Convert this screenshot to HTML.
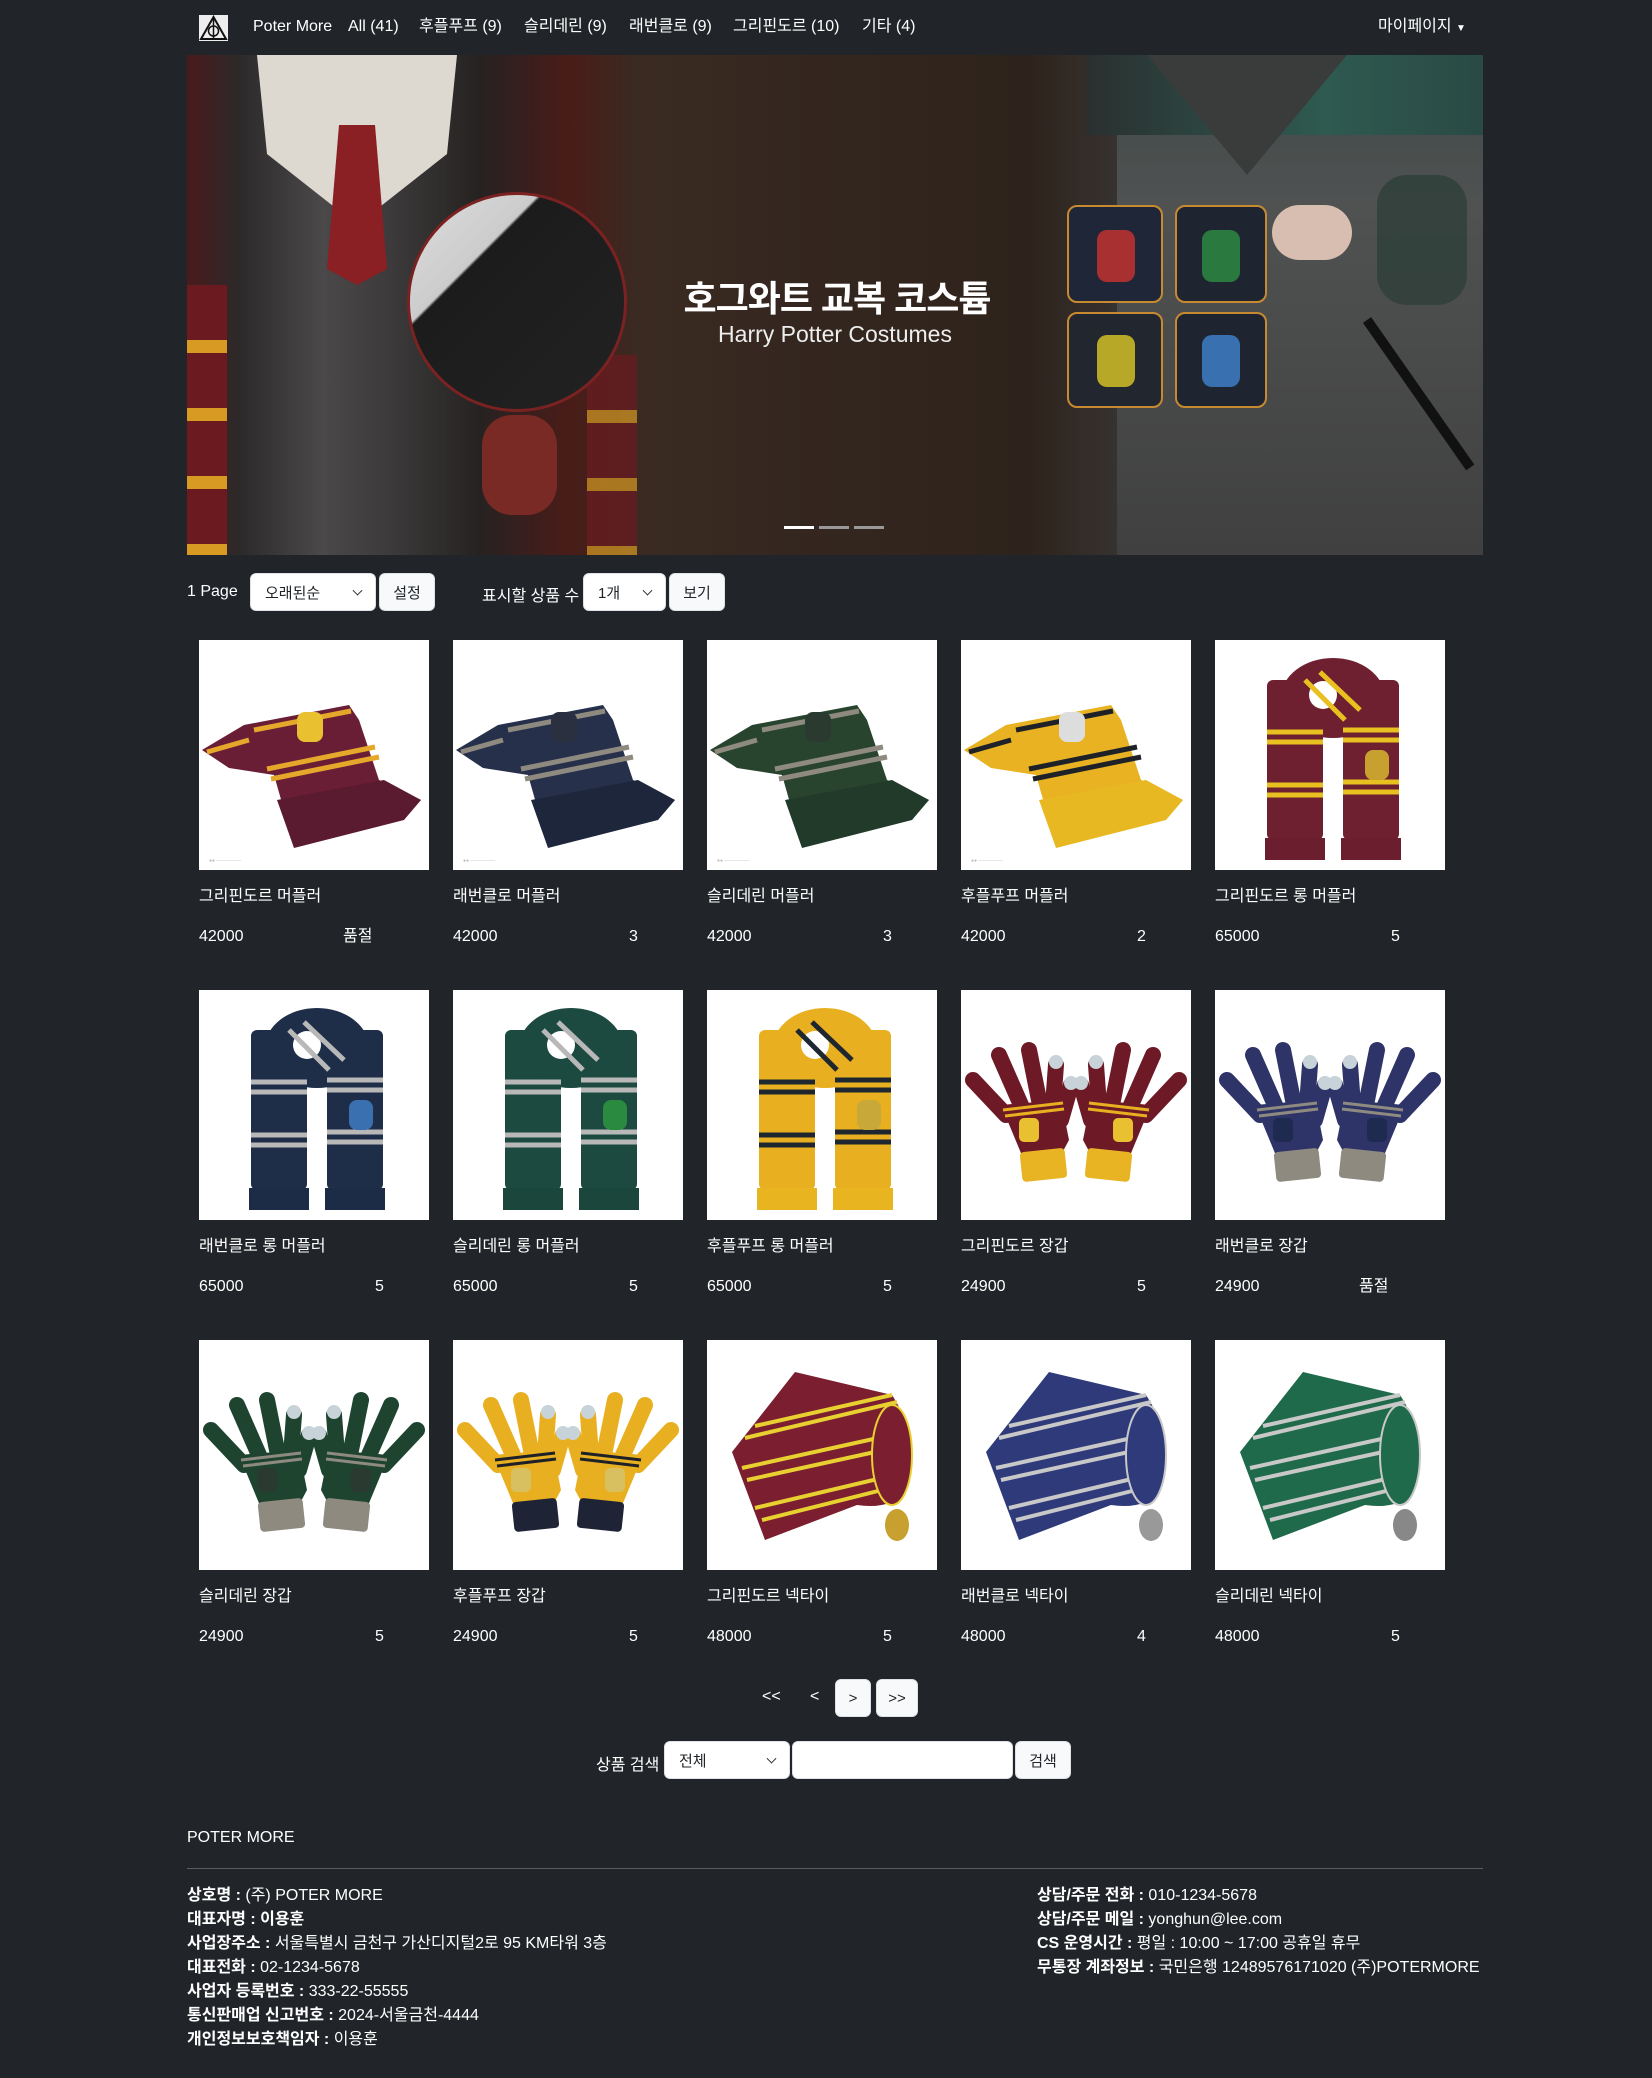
<!DOCTYPE html>
<html><head><meta charset="utf-8">
<style>
*{box-sizing:border-box;margin:0;padding:0}
html,body{width:1652px;height:2078px;background:#212529;overflow:hidden}
body{font-family:"Liberation Sans","Noto Sans CJK KR",sans-serif;color:#fff;position:relative;font-size:16px}
.a{position:absolute;white-space:nowrap}
.nav a{position:absolute;top:17px;color:#fff;font-size:16px;text-decoration:none;line-height:20px}
.btn{position:absolute;background:#f8f9fa;color:#212529;border-radius:6px;border:1px solid #dee2e6;font-size:15px;display:flex;align-items:center;justify-content:center}
.sel{position:absolute;background:#fff;color:#212529;border-radius:6px;border:1px solid #dee2e6;font-size:15px;padding-left:14px;display:flex;align-items:center}
.sel:after{content:"";position:absolute;right:14px;top:50%;width:6px;height:6px;border-right:1.5px solid #333;border-bottom:1.5px solid #333;transform:translateY(-70%) rotate(45deg)}
.card{position:absolute;width:230px}
.card svg{display:block;width:230px;height:230px;background:#fff}
.card .n{position:absolute;top:247px;left:0;font-size:16px;line-height:20px}
.card .p{position:absolute;top:287px;left:0;font-size:16px;line-height:20px}
.card .s{position:absolute;top:287px;left:176px;font-size:16px;line-height:20px}
.card .s.so{left:144px}
.ft{position:absolute;font-size:16px;line-height:24px}
.ft b{font-weight:bold}
</style></head><body>
<svg width="0" height="0" style="position:absolute">
<defs>
<symbol id="fold" viewBox="0 0 230 230">
<path d="M3 110 L45 85 L150 65 L160 80 L180 140 L222 160 L200 178 L95 205 L75 135 L30 128 Z" style="fill:var(--a)"/>
<path d="M78 160 L185 140 L222 160 L205 180 L95 208 Z" style="fill:var(--d)"/>
<path d="M55 90 L152 71 M8 112 L50 100 M68 129 L176 107 M72 139 L180 117" style="stroke:var(--b)" stroke-width="5" fill="none"/>
<rect x="98" y="72" width="26" height="30" rx="8" style="fill:var(--c)"/>
<text x="10" y="222" font-size="5" fill="#bbb">●● ───────</text>
</symbol>
<symbol id="long" viewBox="0 0 230 230">
<rect x="52" y="40" width="56" height="160" rx="6" style="fill:var(--a)"/>
<rect x="128" y="40" width="56" height="160" rx="6" style="fill:var(--a)"/>
<ellipse cx="118" cy="58" rx="52" ry="40" style="fill:var(--a)"/>
<circle cx="108" cy="55" r="14" fill="#fff"/>
<path d="M52 92 H108 M52 102 H108 M128 90 H184 M128 100 H184 M52 145 H108 M52 155 H108 M128 142 H184 M128 152 H184 M90 40 L130 80 M105 32 L145 70" style="stroke:var(--b)" stroke-width="5" fill="none"/>
<rect x="50" y="198" width="60" height="22" style="fill:var(--d)"/>
<rect x="126" y="198" width="60" height="22" style="fill:var(--d)"/>
<rect x="150" y="110" width="24" height="30" rx="8" style="fill:var(--c)"/>
</symbol>
<symbol id="glove" viewBox="0 0 230 230">
<g style="stroke:var(--a)" stroke-width="16" stroke-linecap="round" fill="none">
<path d="M12 90 L45 125 M38 65 L60 115 M68 60 L78 110 M95 75 L92 115 M110 95 L100 130"/>
<path d="M218 90 L185 125 M192 65 L170 115 M162 60 L152 110 M135 75 L138 115 M120 95 L130 130"/>
</g>
<path d="M40 115 L100 110 L108 150 L100 165 L62 168 Z" style="fill:var(--a)"/>
<path d="M190 115 L130 110 L122 150 L130 165 L168 168 Z" style="fill:var(--a)"/>
<path d="M42 120 L102 113 M44 126 L103 119 M188 120 L128 113 M186 126 L127 119" style="stroke:var(--b)" stroke-width="3" fill="none"/>
<rect x="60" y="160" width="45" height="30" rx="4" transform="rotate(-6 82 175)" style="fill:var(--c)"/>
<rect x="125" y="160" width="45" height="30" rx="4" transform="rotate(6 148 175)" style="fill:var(--c)"/>
<circle cx="95" cy="72" r="7" fill="#c7d3d8"/><circle cx="135" cy="72" r="7" fill="#c7d3d8"/>
<circle cx="110" cy="93" r="7" fill="#c7d3d8"/><circle cx="120" cy="93" r="7" fill="#c7d3d8"/>
<rect x="58" y="128" width="20" height="24" rx="5" style="fill:var(--e)"/>
<rect x="152" y="128" width="20" height="24" rx="5" style="fill:var(--e)"/>
</symbol>
<symbol id="tie" viewBox="0 0 230 230">
<path d="M25 112 L88 32 L185 55 Q212 95 200 150 Q185 170 150 165 L58 200 Z" style="fill:var(--a)"/>
<path d="M38 98 L190 62 M48 86 L185 55 M35 128 L198 92 M40 140 L200 105 M48 168 L200 132 M55 180 L195 145" style="stroke:var(--b)" stroke-width="4" fill="none"/>
<ellipse cx="185" cy="115" rx="20" ry="50" style="fill:var(--a);stroke:var(--b)" stroke-width="2"/>
<ellipse cx="190" cy="185" rx="12" ry="16" style="fill:var(--c)"/>
</symbol>
</defs></svg>

<div class="nav">
<svg class="a" style="left:199px;top:15px" width="29" height="26" viewBox="0 0 29 26"><rect width="29" height="26" fill="#eee"/><path d="M14.5 2 L27 24 H2 Z" fill="none" stroke="#111" stroke-width="2"/><circle cx="14.5" cy="16" r="5" fill="none" stroke="#111" stroke-width="1.5"/><path d="M14.5 2 V24" stroke="#111" stroke-width="1.5"/></svg>
<a style="left:253px">Poter More</a>
<a style="left:348px">All (41)</a>
<a style="left:419px">후플푸프 (9)</a>
<a style="left:524px">슬리데린 (9)</a>
<a style="left:629px">래번클로 (9)</a>
<a style="left:733px">그리핀도르 (10)</a>
<a style="left:862px">기타 (4)</a>
<a style="left:1378px">마이페이지 <span style="font-size:10px">▼</span></a>
</div>

<!-- banner -->
<div class="a" style="left:187px;top:55px;width:1296px;height:500px;overflow:hidden;background:linear-gradient(90deg,#2a2222 0,#3a2a22 35%,#33261e 50%,#2e231c 65%,#3e4042 78%,#4a4b4c 100%)">
 <div class="a" style="left:0;top:0;width:450px;height:500px;background:linear-gradient(90deg,#4a1a1c 0,#2c2a2a 12%,#4a4848 30%,#3c3a3a 45%,#262222 65%,#4a1c18 85%,#3a2a22 100%)"></div>
 <div class="a" style="left:0;top:230px;width:40px;height:270px;background:repeating-linear-gradient(180deg,#6b1a20 0,#6b1a20 55px,#d89a22 55px,#d89a22 68px)"></div>
 <div class="a" style="left:400px;top:300px;width:50px;height:200px;background:repeating-linear-gradient(180deg,#6b1a20 0,#6b1a20 55px,#d89a22 55px,#d89a22 68px);opacity:.7"></div>
 <div class="a" style="left:70px;top:0;width:200px;height:180px;background:#ddd8d0;clip-path:polygon(0 0,100% 0,95% 55%,55% 90%,45% 90%,5% 55%)"></div>
 <div class="a" style="left:140px;top:70px;width:60px;height:160px;background:#8a1f24;clip-path:polygon(20% 0,80% 0,100% 90%,50% 100%,0 90%)"></div>
 <div class="a" style="left:220px;top:137px;width:220px;height:220px;border-radius:50%;background:linear-gradient(135deg,#ddd 0,#ccc 30%,#1c1c1c 31%,#222 100%);border:3px solid #7a2222"></div>
 <div class="a" style="left:295px;top:360px;width:75px;height:100px;border-radius:30px;background:#7a2a24"></div>
 <div class="a" style="left:930px;top:0;width:366px;height:500px;background:linear-gradient(180deg,#3e4846 0,#505252 30%,#404040 100%)"></div>
 <div class="a" style="left:900px;top:0;width:396px;height:80px;background:linear-gradient(90deg,#2a3030,#2e5a50 60%,#2a4a44)"></div>
 <div class="a" style="left:960px;top:0;width:200px;height:120px;background:#3a3c3c;clip-path:polygon(0 0,100% 0,50% 100%)"></div>
 <div class="a" style="left:1190px;top:120px;width:90px;height:130px;border-radius:30px;background:#2e3e3a;opacity:.8"></div>
 <div class="a" style="left:880px;top:150px;width:96px;height:98px;border:2px solid #c88a30;border-radius:10px;background:#1e2638"></div>
 <div class="a" style="left:988px;top:150px;width:92px;height:98px;border:2px solid #c88a30;border-radius:10px;background:#1e2430"></div>
 <div class="a" style="left:880px;top:257px;width:96px;height:96px;border:2px solid #c88a30;border-radius:10px;background:#22262e"></div>
 <div class="a" style="left:988px;top:257px;width:92px;height:96px;border:2px solid #c88a30;border-radius:10px;background:#1e2430"></div>
 <div class="a" style="left:910px;top:175px;width:38px;height:52px;border-radius:10px;background:#a83030"></div>
 <div class="a" style="left:1015px;top:175px;width:38px;height:52px;border-radius:10px;background:#2a7a40"></div>
 <div class="a" style="left:910px;top:280px;width:38px;height:52px;border-radius:10px;background:#b8a828"></div>
 <div class="a" style="left:1015px;top:280px;width:38px;height:52px;border-radius:10px;background:#3870b0"></div>
 <div class="a" style="left:1085px;top:150px;width:80px;height:55px;border-radius:28px;background:#d8beb0"></div>
 <div class="a" style="left:1180px;top:260px;width:180px;height:10px;background:#111;transform:rotate(55deg);transform-origin:left center"></div>
 <div class="a" style="left:0;top:215px;width:1296px;text-align:center;padding-left:4px;font-size:36px;font-weight:bold;color:#fff;letter-spacing:-1px">호그와트 교복 코스튬</div>
 <div class="a" style="left:0;top:266px;width:1296px;text-align:center;font-size:23px;color:#eee">Harry Potter Costumes</div>
 <div class="a" style="left:597px;top:471px;width:30px;height:3px;background:#fff"></div>
 <div class="a" style="left:632px;top:471px;width:30px;height:3px;background:#999"></div>
 <div class="a" style="left:667px;top:471px;width:30px;height:3px;background:#999"></div>
</div>

<!-- controls -->
<div class="a" style="left:187px;top:583px;font-size:16px">1 Page</div>
<div class="sel" style="left:250px;top:573px;width:126px;height:38px">오래된순</div>
<div class="btn" style="left:379px;top:573px;width:56px;height:38px">설정</div>
<div class="a" style="left:482px;top:582px;font-size:16px">표시할 상품 수</div>
<div class="sel" style="left:583px;top:573px;width:83px;height:38px">1개</div>
<div class="btn" style="left:669px;top:573px;width:56px;height:38px">보기</div>

<!-- row 1 -->
<div class="card" style="left:199px;top:640px;--a:#6a1e36;--b:#e6a82a;--c:#e8c030;--d:#5a1a30"><svg><use href="#fold"/></svg><div class="n">그리핀도르 머플러</div><div class="p">42000</div><div class="s so">품절</div></div>
<div class="card" style="left:453px;top:640px;--a:#26304a;--b:#8e8a80;--c:#2a3040;--d:#1e263c"><svg><use href="#fold"/></svg><div class="n">래번클로 머플러</div><div class="p">42000</div><div class="s">3</div></div>
<div class="card" style="left:707px;top:640px;--a:#28442f;--b:#8e8a80;--c:#2a3a30;--d:#223a2a"><svg><use href="#fold"/></svg><div class="n">슬리데린 머플러</div><div class="p">42000</div><div class="s">3</div></div>
<div class="card" style="left:961px;top:640px;--a:#e8b222;--b:#1e2228;--c:#ddd;--d:#e8b822"><svg><use href="#fold"/></svg><div class="n">후플푸프 머플러</div><div class="p">42000</div><div class="s">2</div></div>
<div class="card" style="left:1215px;top:640px;--a:#6e2030;--b:#e8c020;--c:#c8a030;--d:#6a1e2e"><svg><use href="#long"/></svg><div class="n">그리핀도르 롱 머플러</div><div class="p">65000</div><div class="s">5</div></div>
<!-- row 2 -->
<div class="card" style="left:199px;top:990px;--a:#1e2e48;--b:#b8b8b8;--c:#3a70b0;--d:#1c2c46"><svg><use href="#long"/></svg><div class="n">래번클로 롱 머플러</div><div class="p">65000</div><div class="s">5</div></div>
<div class="card" style="left:453px;top:990px;--a:#1c4a40;--b:#b8b8b8;--c:#2a8a40;--d:#1a463c"><svg><use href="#long"/></svg><div class="n">슬리데린 롱 머플러</div><div class="p">65000</div><div class="s">5</div></div>
<div class="card" style="left:707px;top:990px;--a:#e8b020;--b:#1e2630;--c:#c8a838;--d:#e8b420"><svg><use href="#long"/></svg><div class="n">후플푸프 롱 머플러</div><div class="p">65000</div><div class="s">5</div></div>
<div class="card" style="left:961px;top:990px;--a:#6e1a26;--b:#e8b020;--c:#e8b424;--e:#e8c030"><svg><use href="#glove"/></svg><div class="n">그리핀도르 장갑</div><div class="p">24900</div><div class="s">5</div></div>
<div class="card" style="left:1215px;top:990px;--a:#2e3468;--b:#8e8a80;--c:#8e8a80;--e:#1e2a50"><svg><use href="#glove"/></svg><div class="n">래번클로 장갑</div><div class="p">24900</div><div class="s so">품절</div></div>
<!-- row 3 -->
<div class="card" style="left:199px;top:1340px;--a:#1e4430;--b:#8e8a80;--c:#8e8a80;--e:#2a3a30"><svg><use href="#glove"/></svg><div class="n">슬리데린 장갑</div><div class="p">24900</div><div class="s">5</div></div>
<div class="card" style="left:453px;top:1340px;--a:#e8b020;--b:#1e2228;--c:#1e2436;--e:#d8c060"><svg><use href="#glove"/></svg><div class="n">후플푸프 장갑</div><div class="p">24900</div><div class="s">5</div></div>
<div class="card" style="left:707px;top:1340px;--a:#7a1e30;--b:#e8d030;--c:#c8a030"><svg><use href="#tie"/></svg><div class="n">그리핀도르 넥타이</div><div class="p">48000</div><div class="s">5</div></div>
<div class="card" style="left:961px;top:1340px;--a:#2e3a7a;--b:#c8c8c8;--c:#999"><svg><use href="#tie"/></svg><div class="n">래번클로 넥타이</div><div class="p">48000</div><div class="s">4</div></div>
<div class="card" style="left:1215px;top:1340px;--a:#1e6a4a;--b:#c8c8c8;--c:#888"><svg><use href="#tie"/></svg><div class="n">슬리데린 넥타이</div><div class="p">48000</div><div class="s">5</div></div>

<!-- pagination -->
<div class="a" style="left:762px;top:1688px;font-size:16px">&lt;&lt;</div>
<div class="a" style="left:810px;top:1688px;font-size:16px">&lt;</div>
<div class="btn" style="left:835px;top:1679px;width:36px;height:38px">&gt;</div>
<div class="btn" style="left:876px;top:1679px;width:42px;height:38px">&gt;&gt;</div>

<!-- search -->
<div class="a" style="left:596px;top:1751px;font-size:16px">상품 검색</div>
<div class="sel" style="left:664px;top:1741px;width:126px;height:38px">전체</div>
<div class="a" style="left:792px;top:1741px;width:221px;height:38px;background:#fff;border-radius:6px;border:1px solid #dee2e6"></div>
<div class="btn" style="left:1015px;top:1741px;width:56px;height:38px">검색</div>

<!-- footer -->
<div class="a" style="left:187px;top:1829px;font-size:16px">POTER MORE</div>
<div class="a" style="left:187px;top:1868px;width:1296px;height:1px;background:#5a5e63"></div>
<div class="ft" style="left:187px;top:1884px">
<div><b>상호명 :</b> (주) POTER MORE</div>
<div><b>대표자명 : 이용훈</b></div>
<div><b>사업장주소 :</b> 서울특별시 금천구 가산디지털2로 95 KM타워 3층</div>
<div><b>대표전화 :</b> 02-1234-5678</div>
<div><b>사업자 등록번호 :</b> 333-22-55555</div>
<div><b>통신판매업 신고번호 :</b> 2024-서울금천-4444</div>
<div><b>개인정보보호책임자 :</b> 이용훈</div>
</div>
<div class="ft" style="left:1037px;top:1884px">
<div><b>상담/주문 전화 :</b> 010-1234-5678</div>
<div><b>상담/주문 메일 :</b> yonghun@lee.com</div>
<div><b>CS 운영시간 :</b> 평일 : 10:00 ~ 17:00 공휴일 휴무</div>
<div><b>무통장 계좌정보 :</b> 국민은행 12489576171020 (주)POTERMORE</div>
</div>
</body></html>
